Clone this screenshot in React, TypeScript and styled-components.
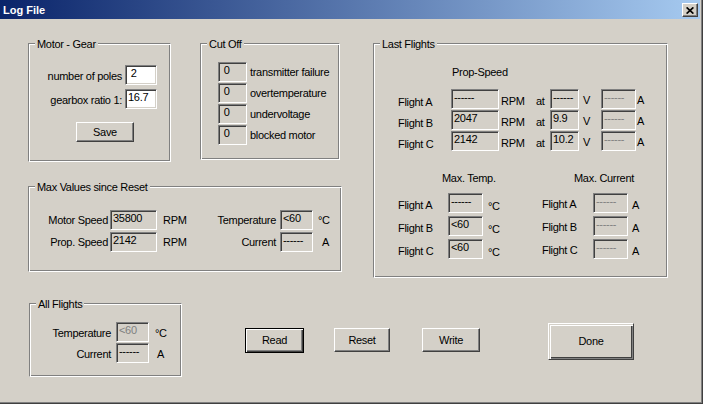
import React from "react";
import styled, { createGlobalStyle } from "styled-components";

const GlobalStyle = createGlobalStyle`
  html, body {
    margin: 0;
    padding: 0;
    background: #d4d0c8;
    overflow: hidden;
  }
  body {
    font-family: "Liberation Sans", Arial, sans-serif;
    font-size: 11px;
  }
`;

export default function App() {
  return (
    <>
      <GlobalStyle />
      <Window>
        <TitleBar>
          <TitleText>Log File</TitleText>
          <CloseButton>
            <svg width="8" height="7" viewBox="0 0 8 7">
              <path
                d="M0.6 0.4 L7.4 6.6 M7.4 0.4 L0.6 6.6"
                stroke="#000"
                strokeWidth="1.7"
                fill="none"
              />
            </svg>
          </CloseButton>
        </TitleBar>

        <Client>
          <TopSection>
            <LeftColumn>
              <TopRow>
                {/* Motor - Gear */}
                <Group $w={143} $h={119} $pad="21px 13px 0 0">
                  <GroupTitle>Motor - Gear</GroupTitle>
                  <EditRow>
                    <Caption $pt={5} $pr={3}>number of poles</Caption>
                    <Field $w={32} $white>
                      &nbsp;2
                    </Field>
                  </EditRow>
                  <EditRow $mt={4}>
                    <Caption $pt={5} $pr={3}>gearbox ratio 1:</Caption>
                    <Field $w={32} $white>
                      16.7
                    </Field>
                  </EditRow>
                  <Button $w={58} $h={20} $mt={13} $ml={47}>
                    Save
                  </Button>
                </Group>

                {/* Cut Off */}
                <Group $w={140} $h={117} $ml={29} $pad="18px 0 0 17px">
                  <GroupTitle>Cut Off</GroupTitle>
                  <CutList>
                    {[
                      "transmitter failure",
                      "overtemperature",
                      "undervoltage",
                      "blocked motor",
                    ].map((label) => (
                      <CutRow key={label}>
                        <Field $w={29}>&nbsp;0</Field>
                        <Caption $pt={4} $pl={3}>
                          {label}
                        </Caption>
                      </CutRow>
                    ))}
                  </CutList>
                </Group>
              </TopRow>

              {/* Max Values since Reset */}
              <Group $w={314} $h={86} $mt={24} $pad="23px 0 0 0">
                <GroupTitle>Max Values since Reset</GroupTitle>
                <FormGrid $cols="81px 47px 43px 80px 33px auto" $gap={2}>
                  <Caption $pt={4} $pr={2} $right>Motor Speed</Caption>
                  <Field $w={47}>35800</Field>
                  <Caption $pt={4} $pl={6}>RPM</Caption>
                  <Caption $pt={4} $pr={4} $right>Temperature</Caption>
                  <Field $w={33}>&lt;60</Field>
                  <Caption $pt={4} $pl={5}>°C</Caption>

                  <Caption $pt={4} $pr={2} $right>Prop. Speed</Caption>
                  <Field $w={47}>2142</Field>
                  <Caption $pt={4} $pl={6}>RPM</Caption>
                  <Caption $pt={4} $pr={4} $right>Current</Caption>
                  <Field $w={33}>------</Field>
                  <Caption $pt={4} $pl={9}>A</Caption>
                </FormGrid>
              </Group>
            </LeftColumn>

            {/* Last Flights */}
            <Group $w={295} $h={235} $ml={31} $pad="22px 0 0 24px">
              <GroupTitle>Last Flights</GroupTitle>
              <Heading $pl={54}>Prop-Speed</Heading>
              <FormGrid
                $cols="53px 48px 37px 14px 29px 22px 35px auto"
                $gap={1}
                $mt={10}
              >
                {[
                  { name: "Flight A", rpm: "------", volt: "------" },
                  { name: "Flight B", rpm: "2047", volt: "9.9" },
                  { name: "Flight C", rpm: "2142", volt: "10.2" },
                ].map((f) => (
                  <React.Fragment key={f.name}>
                    <Caption $pt={7}>{f.name}</Caption>
                    <Field $w={48}>{f.rpm}</Field>
                    <Caption $pt={6} $pl={2}>RPM</Caption>
                    <Caption $pt={6}>at</Caption>
                    <Field $w={29}>{f.volt}</Field>
                    <Caption $pt={5} $pl={4}>V</Caption>
                    <Field $w={35} $dim>
                      ------
                    </Field>
                    <Caption $pt={5} $pl={1}>A</Caption>
                  </React.Fragment>
                ))}
              </FormGrid>

              <MaxRow>
                <MaxColumn $w={144}>
                  <Heading $pl={44}>Max. Temp.</Heading>
                  <FormGrid $cols="50px 35px auto" $gap={3} $mt={8}>
                    {[
                      ["Flight A", "------"],
                      ["Flight B", "<60"],
                      ["Flight C", "<60"],
                    ].map(([name, val]) => (
                      <React.Fragment key={name}>
                        <Caption $pt={6}>{name}</Caption>
                        <Field $w={35}>{val}</Field>
                        <Caption $pt={7} $pl={5}>°C</Caption>
                      </React.Fragment>
                    ))}
                  </FormGrid>
                </MaxColumn>
                <MaxColumn $w={100}>
                  <Heading $pl={32}>Max. Current</Heading>
                  <FormGrid $cols="51px 35px auto" $gap={3} $mt={8}>
                    {["Flight A", "Flight B", "Flight C"].map((name) => (
                      <React.Fragment key={name}>
                        <Caption $pt={5}>{name}</Caption>
                        <Field $w={35} $dim>
                          ------
                        </Field>
                        <Caption $pt={6} $pl={4}>A</Caption>
                      </React.Fragment>
                    ))}
                  </FormGrid>
                </MaxColumn>
              </MaxRow>
            </Group>
          </TopSection>

          <BottomSection>
            {/* All Flights */}
            <Group $w={153} $h={74} $pad="18px 0 0 0">
              <GroupTitle>All Flights</GroupTitle>
              <FormGrid $cols="86px 33px auto" $gap={1}>
                <Caption $pt={5} $pr={5} $right>Temperature</Caption>
                <Field $w={33} $dim>
                  &lt;60
                </Field>
                <Caption $pt={5} $pl={6}>°C</Caption>
                <Caption $pt={5} $pr={5} $right>Current</Caption>
                <Field $w={33}>------</Field>
                <Caption $pt={5} $pl={8}>A</Caption>
              </FormGrid>
            </Group>

            <Button $w={59} $h={25} $mt={25} $ml={63} $variant="default">
              Read
            </Button>
            <Button $w={56} $h={24} $mt={25} $ml={30}>
              Reset
            </Button>
            <Button $w={58} $h={24} $mt={25} $ml={32}>
              Write
            </Button>
            <Button $w={86} $h={37} $mt={20} $ml={68} $variant="double">
              Done
            </Button>
          </BottomSection>
        </Client>
      </Window>
    </>
  );
}

// SECTION styled - window
const Window = styled.div`
  width: 703px;
  height: 404px;
  box-sizing: border-box;
  background: #d4d0c8;
  border-right: 1px solid #404040;
  border-bottom: 1px solid #404040;
  box-shadow: inset -1px -1px 0 #808080;
  padding: 0 2px 1px 0;
  display: flex;
  flex-direction: column;
  color: #000;
  letter-spacing: -0.3px;
`;

const TitleBar = styled.div`
  height: 19px;
  flex-shrink: 0;
  display: flex;
  align-items: center;
  justify-content: space-between;
  padding: 0 2px 0 3px;
  background: linear-gradient(to right, #0a246a, #a6caf0);
`;

const TitleText = styled.span`
  color: #fff;
  font-weight: bold;
  font-size: 11px;
  letter-spacing: 0;
`;

const CloseButton = styled.div`
  box-sizing: border-box;
  width: 16px;
  height: 14px;
  display: flex;
  align-items: center;
  justify-content: center;
  background: #d4d0c8;
  border: 1px solid;
  border-color: #fff #404040 #404040 #fff;
  box-shadow: inset -1px -1px 0 #808080;
  padding-top: 1px;
`;

const Client = styled.div`
  flex: 1;
  padding: 24px 0 0 28px;
`;

const TopSection = styled.div`
  display: flex;
  align-items: flex-start;
`;

const LeftColumn = styled.div`
  width: 314px;
  display: flex;
  flex-direction: column;
`;

const TopRow = styled.div`
  display: flex;
  align-items: flex-start;
`;

const BottomSection = styled.div`
  display: flex;
  align-items: flex-start;
  margin-top: 25px;
  padding-left: 1px;
`;
// !SECTION styled - window

// SECTION styled - controls
const Group = styled.div<{
  $w: number;
  $h: number;
  $mt?: number;
  $ml?: number;
  $pad: string;
}>`
  position: relative;
  box-sizing: border-box;
  flex-shrink: 0;
  width: ${({ $w }) => $w}px;
  height: ${({ $h }) => $h}px;
  margin-top: ${({ $mt }) => $mt || 0}px;
  margin-left: ${({ $ml }) => $ml || 0}px;
  padding: ${({ $pad }) => $pad};
  border: 1px solid;
  border-color: #808080 #fff #fff #808080;
  box-shadow: inset 1px 1px 0 #fff, inset -1px -1px 0 #808080;
`;

const GroupTitle = styled.span`
  position: absolute;
  top: -6px;
  left: 6px;
  padding: 0 2px;
  line-height: 13px;
  background: #d4d0c8;
  white-space: nowrap;
`;

const Caption = styled.div<{
  $pt?: number;
  $pl?: number;
  $pr?: number;
  $right?: boolean;
}>`
  line-height: 13px;
  white-space: nowrap;
  padding-top: ${({ $pt }) => $pt || 0}px;
  padding-left: ${({ $pl }) => $pl || 0}px;
  padding-right: ${({ $pr }) => $pr || 0}px;
  text-align: ${({ $right }) => ($right ? "right" : "left")};
`;

const Heading = styled.div<{ $pl: number }>`
  line-height: 13px;
  padding-left: ${({ $pl }) => $pl}px;
  white-space: nowrap;
`;

const Field = styled.div<{ $w: number; $white?: boolean; $dim?: boolean }>`
  box-sizing: border-box;
  width: ${({ $w }) => $w}px;
  height: 20px;
  padding: 1px 0 0 2px;
  line-height: 13px;
  white-space: nowrap;
  overflow: hidden;
  border: 1px solid;
  border-color: #808080 #fff #fff #808080;
  box-shadow: inset 1px 1px 0 #404040, inset -1px -1px 0 #d4d0c8;
  background: ${({ $white }) => ($white ? "#fff" : "#d4d0c8")};
  color: ${({ $dim }) => ($dim ? "#808080" : "#000")};
`;

const EditRow = styled.div<{ $mt?: number }>`
  display: flex;
  justify-content: flex-end;
  margin-top: ${({ $mt }) => $mt || 0}px;
`;

const CutList = styled.div`
  display: flex;
  flex-direction: column;
  gap: 1px;
`;

const CutRow = styled.div`
  display: flex;
`;

const FormGrid = styled.div<{ $cols: string; $gap: number; $mt?: number }>`
  display: grid;
  grid-template-columns: ${({ $cols }) => $cols};
  grid-auto-rows: 20px;
  row-gap: ${({ $gap }) => $gap}px;
  margin-top: ${({ $mt }) => $mt || 0}px;
  align-items: start;
`;

const MaxRow = styled.div`
  display: flex;
  margin-top: 21px;
`;

const MaxColumn = styled.div<{ $w: number }>`
  width: ${({ $w }) => $w}px;
  flex-shrink: 0;
`;

const Button = styled.div<{
  $w: number;
  $h: number;
  $mt?: number;
  $ml?: number;
  $variant?: "normal" | "default" | "double";
}>`
  box-sizing: border-box;
  flex-shrink: 0;
  width: ${({ $w }) => $w}px;
  height: ${({ $h }) => $h}px;
  margin-top: ${({ $mt }) => $mt || 0}px;
  margin-left: ${({ $ml }) => $ml || 0}px;
  display: flex;
  align-items: center;
  justify-content: center;
  background: #d4d0c8;
  line-height: 13px;
  border: 1px solid;
  border-color: ${({ $variant }) =>
    $variant === "default" ? "#000" : "#fff #404040 #404040 #fff"};
  box-shadow: ${({ $variant }) =>
    $variant === "default"
      ? "inset 1px 1px 0 #fff, inset -1px -1px 0 #404040, inset -2px -2px 0 #808080"
      : $variant === "double"
      ? "inset 1px 1px 0 #d4d0c8, inset 2px 2px 0 #fff, inset -1px -1px 0 #808080, inset -2px -2px 0 #404040"
      : "inset -1px -1px 0 #808080"};
`;
// !SECTION styled - controls
